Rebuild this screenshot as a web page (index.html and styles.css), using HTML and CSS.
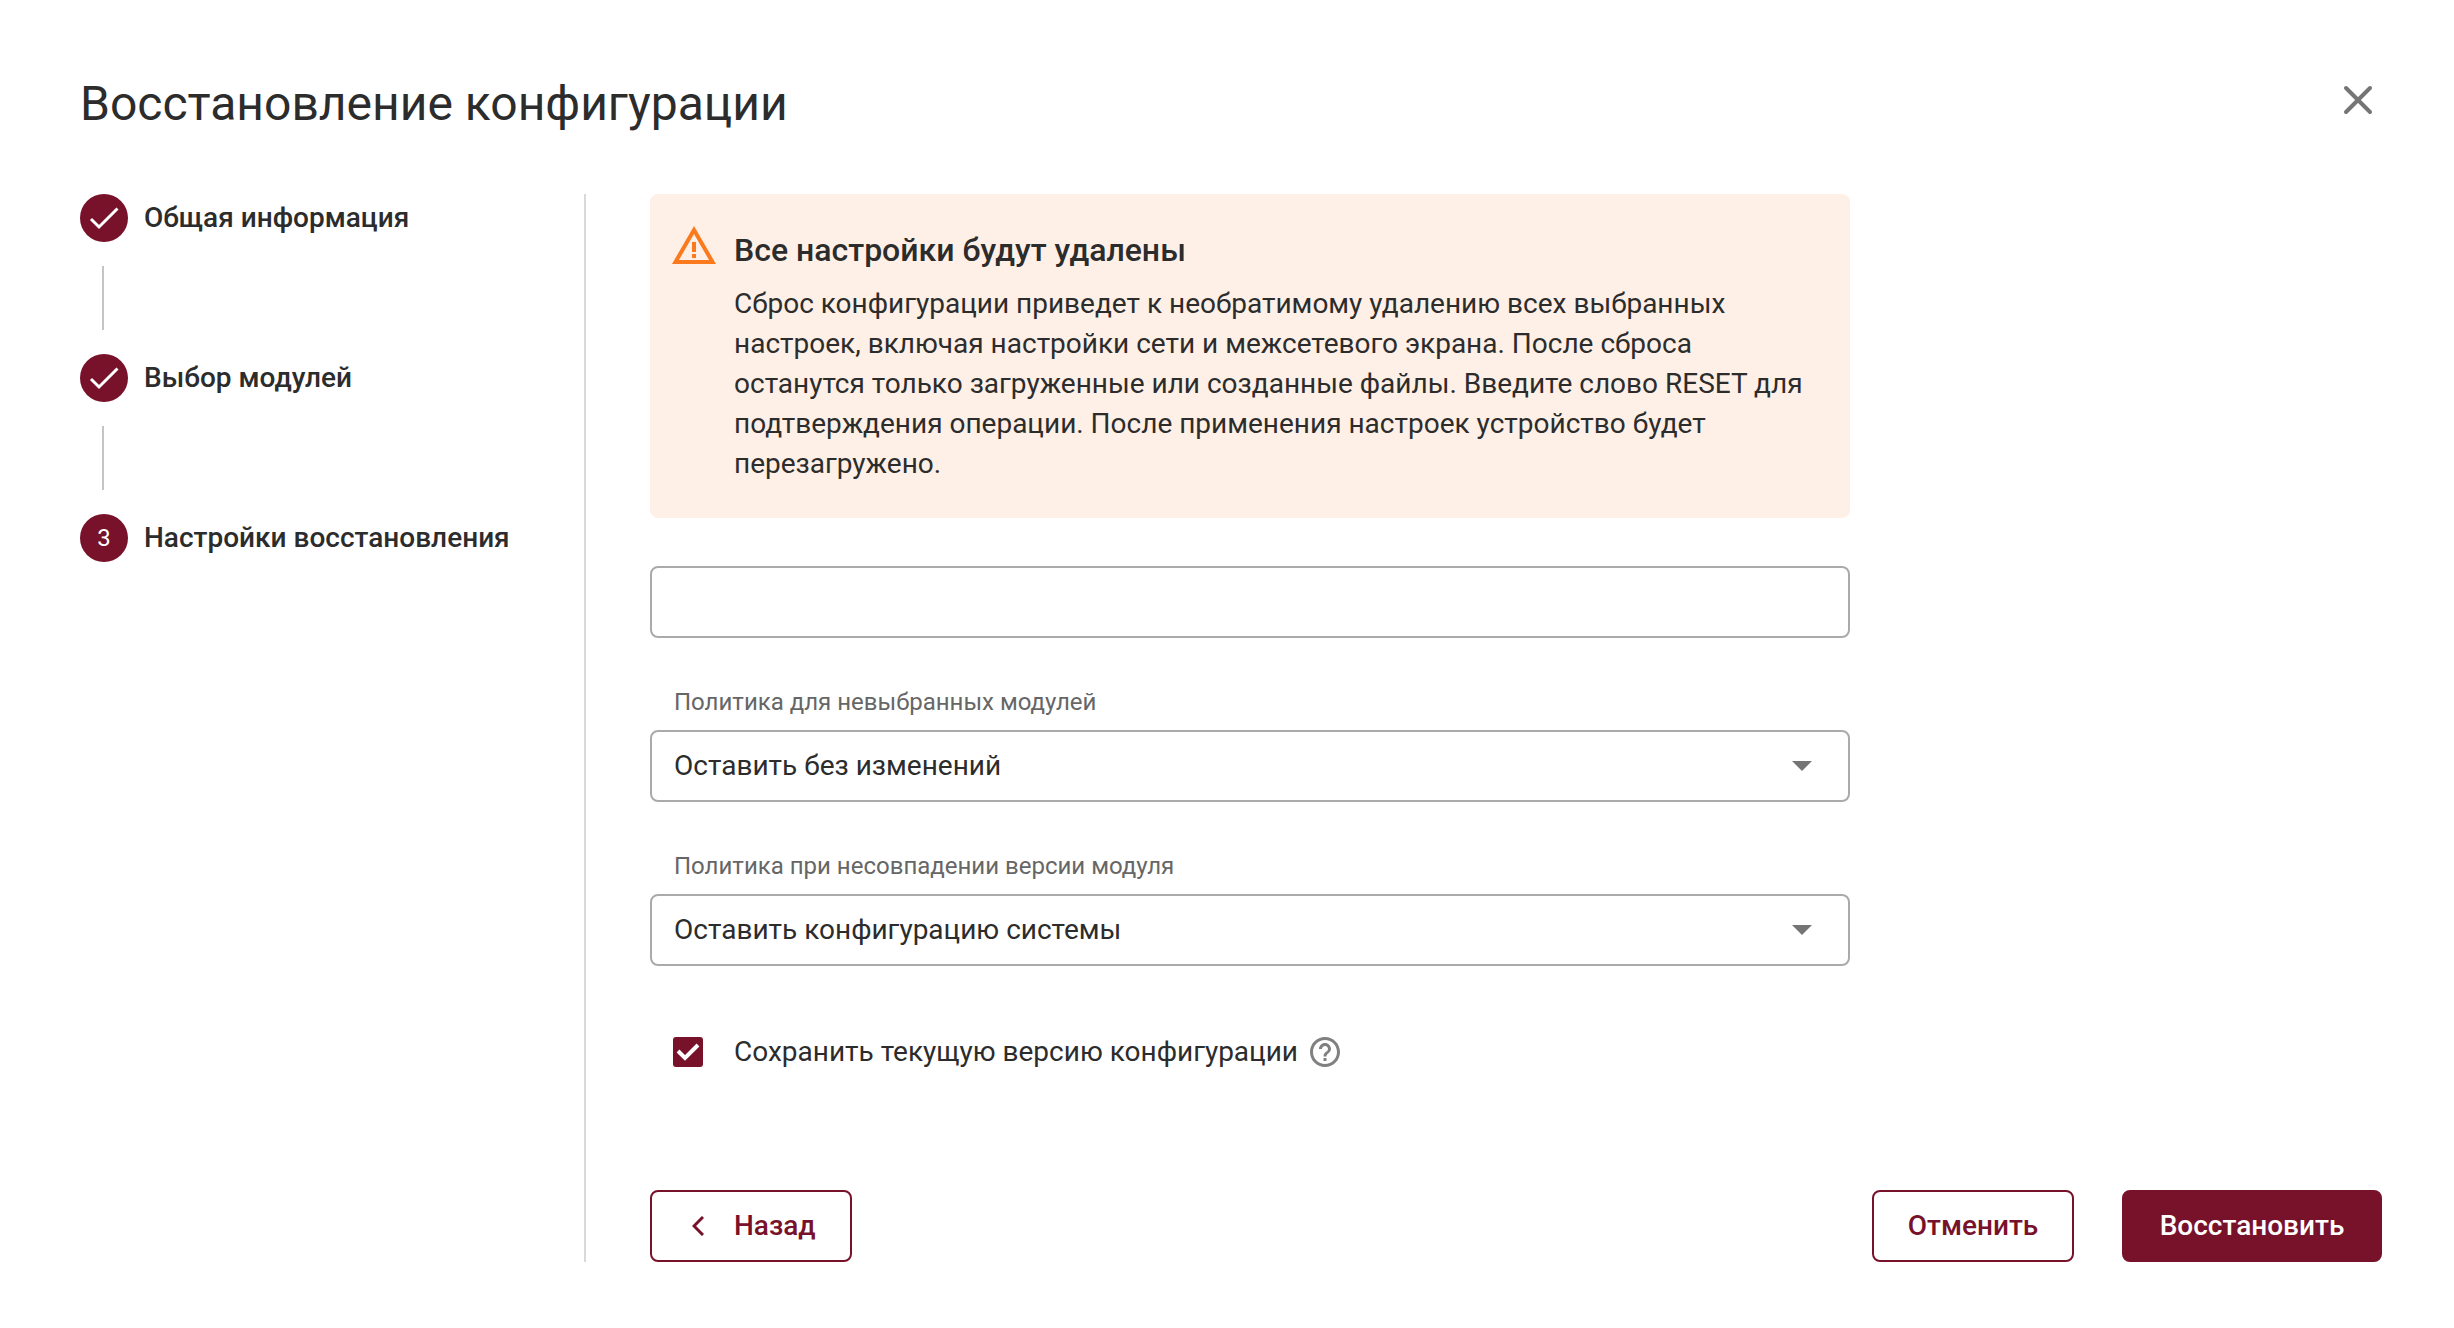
FILE: index.html
```html
<!DOCTYPE html>
<html lang="ru">
<head>
<meta charset="utf-8">
<meta name="viewport" content="width=device-width, initial-scale=1">
<title>Восстановление конфигурации</title>
<link rel="stylesheet" href="styles.css">
</head>
<body>
<main class="wizard">
  <header class="wizard-header">
    <h1 class="wizard-title">Восстановление конфигурации</h1>
    <button class="close" type="button" aria-label="Закрыть">
      <svg class="icon" viewBox="0 0 48 48"><path d="M12 12 36 36M36 12 12 36" fill="none" stroke="currentColor" stroke-width="4" stroke-linecap="round"/></svg>
    </button>
  </header>
  <div class="wizard-body">
    <ol class="steps">
      <li class="step">
        <span class="step-mark"><svg class="step-check" viewBox="0 0 48 48"><path d="M11 25 19 33 37.500 14.500" fill="none" stroke="currentColor" stroke-width="3"/></svg></span>
        <span class="step-label">Общая информация</span>
      </li>
      <li class="step">
        <span class="step-mark"><svg class="step-check" viewBox="0 0 48 48"><path d="M11 25 19 33 37.500 14.500" fill="none" stroke="currentColor" stroke-width="3"/></svg></span>
        <span class="step-label">Выбор модулей</span>
      </li>
      <li class="step" aria-current="step">
        <span class="step-mark">3</span>
        <span class="step-label">Настройки восстановления</span>
      </li>
    </ol>
    <form class="content">
      <div class="fields">
        <section class="alert">
          <svg class="icon alert-icon" viewBox="0 0 24 24" fill="currentColor"><path d="M12 5.99 19.53 19H4.47L12 5.99M12 2 1 21h22L12 2zm1 14h-2v2h2v-2zm0-6h-2v5h2v-5z"/></svg>
          <div class="alert-content">
            <h2 class="alert-title">Все настройки будут удалены</h2>
            <p class="alert-text">Сброс конфигурации приведет к необратимому удалению всех выбранных настроек, включая настройки сети и межсетевого экрана. После сброса останутся только загруженные или созданные файлы. Введите слово RESET для подтверждения операции. После применения настроек устройство будет перезагружено.</p>
          </div>
        </section>
        <input class="control" type="text" aria-label="Слово подтверждения" autocomplete="off">
        <div class="field">
          <label class="field-label" for="unselected">Политика для невыбранных модулей</label>
          <div class="select">
            <select class="control" id="unselected"><option>Оставить без изменений</option></select>
            <svg class="select-arrow" viewBox="0 0 20 10"><path d="M0 0h20L10 10z" fill="currentColor"/></svg>
          </div>
        </div>
        <div class="field">
          <label class="field-label" for="mismatch">Политика при несовпадении версии модуля</label>
          <div class="select">
            <select class="control" id="mismatch"><option>Оставить конфигурацию системы</option></select>
            <svg class="select-arrow" viewBox="0 0 20 10"><path d="M0 0h20L10 10z" fill="currentColor"/></svg>
          </div>
        </div>
        <div class="check-row">
          <input class="checkbox" type="checkbox" id="keep" checked>
          <label for="keep">Сохранить текущую версию конфигурации</label>
          <svg class="help" viewBox="2 2 20 20" fill="currentColor"><path d="M11 18h2v-2h-2v2zm1-16C6.480 2 2 6.480 2 12s4.480 10 10 10 10-4.480 10-10S17.520 2 12 2zm0 18c-4.410 0-8-3.590-8-8s3.590-8 8-8 8 3.590 8 8-3.590 8-8 8zm0-14c-2.210 0-4 1.790-4 4h2c0-1.100.9-2 2-2s2 .9 2 2c0 2-3 1.750-3 5h2c0-2.250 3-2.500 3-5 0-2.210-1.790-4-4-4z"/></svg>
        </div>
      </div>
      <footer class="actions">
        <button class="button button-back" type="button">
          <svg class="back-arrow" viewBox="0 0 12 20"><path d="M11 1 2 10l9 9" fill="none" stroke="currentColor" stroke-width="3"/></svg>
          Назад
        </button>
        <button class="button" type="button">Отменить</button>
        <button class="button button-primary" type="submit">Восстановить</button>
      </footer>
    </form>
  </div>
</main>
</body>
</html>
```
FILE: styles.css
```css
* { box-sizing: border-box; }

body {
  margin: 0;
  background: #fff;
  color: #2c2c2c;
  font: 400 28px/40px Roboto, "Liberation Sans", sans-serif;
}

h1, h2, p, ol { margin: 0; padding: 0; }

.wizard {
  display: flex;
  flex-direction: column;
  min-height: 100vh;
  padding: 72px 72px 66px 80px;
}

.wizard-header {
  display: flex;
  justify-content: space-between;
  align-items: flex-start;
  margin-bottom: 58px;
}

.wizard-title { font-size: 48px; line-height: 64px; font-weight: 400; }

.icon { display: block; width: 48px; height: 48px; flex: none; }

.close {
  padding: 4px 0;
  border: 0;
  background: none;
  color: #757575;
}

.wizard-body {
  flex: 1;
  display: grid;
  grid-template-columns: 506px 1fr;
}

.steps {
  list-style: none;
  border-right: 2px solid #d9d9d9;
}

.step {
  display: grid;
  grid-template-columns: 48px 1fr;
  column-gap: 16px;
  align-items: center;
  font-weight: 500;
}

/* Connector between two steps */
.step:not(:last-child)::after {
  content: "";
  width: 2px;
  height: 64px;
  margin: 24px 22px;
  background: #c4c4c4;
}

.step-mark {
  display: grid;
  place-items: center;
  width: 48px;
  height: 48px;
  border-radius: 50%;
  background: #78122b;
  color: #fff;
  font-size: 24px;
  font-weight: 400;
}

.step-check { width: 48px; height: 48px; }

.content {
  display: flex;
  flex-direction: column;
  padding-left: 64px;
}

.fields {
  display: flex;
  flex-direction: column;
  gap: 48px;
  max-width: 1200px;
}

.alert {
  display: flex;
  gap: 16px;
  padding: 28px 28px 34px 20px;
  border-radius: 8px;
  background: #fef0e7;
}

.alert-icon { color: #fb7a1e; }

.alert-title {
  margin: 8px 0 14px;
  font-size: 32px;
  line-height: 40px;
  font-weight: 500;
}

.field { display: grid; gap: 12px; }

.field-label {
  padding-left: 24px;
  color: #666;
  font-size: 24px;
  line-height: 32px;
}

.control {
  width: 100%;
  height: 72px;
  padding: 0 22px;
  border: 2px solid #aaa;
  border-radius: 8px;
  background: #fff;
  color: inherit;
  font: inherit;
  appearance: none;
}

.select { display: grid; align-items: center; }
.select > * { grid-area: 1 / 1; }

.select-arrow {
  justify-self: end;
  width: 20px;
  height: 10px;
  margin-right: 38px;
  color: #757575;
  pointer-events: none;
}

.check-row {
  display: flex;
  align-items: center;
  padding: 18px 23px;
}

.checkbox {
  appearance: none;
  width: 30px;
  height: 30px;
  margin: 0 31px 0 0;
  border-radius: 3px;
  background: #78122b url("data:image/svg+xml,%3Csvg xmlns='http://www.w3.org/2000/svg' viewBox='0 0 30 30'%3E%3Cpath d='M5 14 12 21 25 8' fill='none' stroke='%23fff' stroke-width='4'/%3E%3C/svg%3E");
}

.help { width: 30px; height: 30px; margin-left: 12px; color: #808080; }

.actions { display: flex; gap: 48px; margin-top: auto; }

.button {
  display: flex;
  align-items: center;
  justify-content: center;
  min-width: 202px;
  height: 72px;
  padding: 0 30px;
  border: 2px solid #78122b;
  border-radius: 8px;
  background: #fff;
  color: #78122b;
  font: inherit;
  font-weight: 500;
}

.button-back {
  justify-content: flex-start;
  gap: 30px;
  margin-right: auto;
  padding-left: 40px;
}
.back-arrow { width: 12px; height: 20px; }

.button-primary { min-width: 260px; background: #78122b; color: #fff; }
```
